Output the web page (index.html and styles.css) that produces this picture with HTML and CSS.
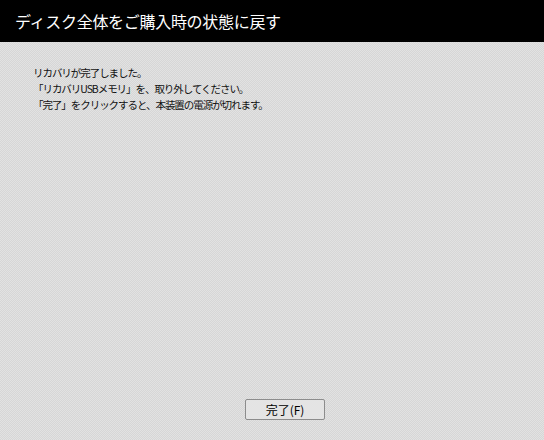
FILE: index.html
```html
<!DOCTYPE html>
<html lang="ja">
<head>
<meta charset="utf-8">
<link rel="stylesheet" href="styles.css">
</head>
<body>
<div class="page">
  <header class="title-bar">
    <h1 class="title">ディスク全体をご購入時の状態に戻す</h1>
  </header>
  <main class="content">
    <div class="message">
      <p class="line">リカバリが完了しました。</p>
      <p class="line">「リカバリUSBメモリ」を、取り外してください。</p>
      <p class="line">「完了」をクリックすると、本装置の電源が切れます。</p>
    </div>
    <div class="actions">
      <button class="btn" type="button">完了(F)</button>
    </div>
  </main>
</div>
</body>
</html>
```

FILE: styles.css
```css
html, body {
  margin: 0;
  padding: 0;
}
body {
  width: 544px;
  height: 440px;
  overflow: hidden;
  font-family: "Noto Sans CJK JP", "Noto Sans", sans-serif;
}
.page {
  width: 544px;
  height: 440px;
  display: flex;
  flex-direction: column;
  background-color: #dcdcdc;
  background-image:
    repeating-conic-gradient(#d6d6d6 0 25%, #e2e2e2 0 50%);
  background-size: 2px 2px;
}
.title-bar {
  height: 42px;
  background: #000;
  display: flex;
  align-items: center;
  padding-left: 15px;
  flex-shrink: 0;
}
.title {
  margin: 0;
  color: #fff;
  font-size: 16px;
  font-weight: 400;
  letter-spacing: -0.3px;
  line-height: 1;
}
.content {
  flex: 1;
  display: flex;
  flex-direction: column;
  justify-content: space-between;
  padding: 23px 0 20px 33px;
}
.message {
  font-size: 10.5px;
  letter-spacing: -1.05px;
  color: #111;
}
.line {
  margin: 0;
  line-height: 16px;
}
.actions {
  display: flex;
  justify-content: center;
  margin-left: -33px;
}
.btn {
  width: 80px;
  height: 21px;
  margin-left: 26px;
  border: 1px solid #8c8c8c;
  border-radius: 2px;
  background: #e4e4e4;
  font-family: "Noto Sans CJK JP", sans-serif;
  font-size: 12px;
  font-weight: 400;
  color: #000;
  padding: 0;
  line-height: 19px;
}
```
